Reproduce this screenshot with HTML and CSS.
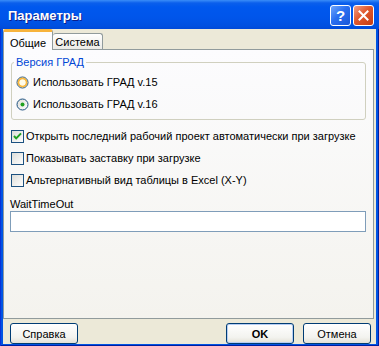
FILE: index.html
```html
<!DOCTYPE html>
<html lang="ru">
<head>
    <meta charset="UTF-8">
    <title>Параметры</title>
    <link rel="stylesheet" href="styles.css">
</head>
<body>
    <div class="window">
        <div class="titlebar">
            <span class="title">Параметры</span>
            <div class="caption-buttons">
                <span class="cap-btn help">?</span>
                <span class="cap-btn close">
                    <svg width="11" height="11" viewBox="0 0 11 11">
                        <path d="M1.5 1.5 L9.5 9.5 M9.5 1.5 L1.5 9.5" stroke="#fff" stroke-width="2" stroke-linecap="square"/>
                    </svg>
                </span>
            </div>
        </div>

        <div class="client">
            <div class="tabs">
                <span class="tab active">Общие</span>
                <span class="tab">Система</span>
            </div>

            <div class="tab-page">
                <fieldset class="group">
                    <legend>Версия ГРАД</legend>
                    <label class="option radio">
                        <svg width="13" height="13" viewBox="0 0 13 13">
                            <defs>
                                <linearGradient id="rfill" x1="0" y1="0" x2="1" y2="1">
                                    <stop offset="0" stop-color="#dcdcd7"/>
                                    <stop offset="1" stop-color="#ffffff"/>
                                </linearGradient>
                            </defs>
                            <circle cx="6.5" cy="6.5" r="5.5" fill="url(#rfill)" stroke="#1c5180"/>
                            <circle cx="6.5" cy="6.5" r="4" fill="none" stroke="#f9b83f" stroke-width="2"/>
                            <circle cx="6.5" cy="6.5" r="3" fill="#fffbe8"/>
                        </svg>
                        Использовать ГРАД v.15
                    </label>
                    <label class="option radio">
                        <svg width="13" height="13" viewBox="0 0 13 13">
                            <circle cx="6.5" cy="6.5" r="5.5" fill="url(#rfill)" stroke="#1c5180"/>
                            <circle cx="6.5" cy="6.5" r="2" fill="#21a121"/>
                        </svg>
                        Использовать ГРАД v.16
                    </label>
                </fieldset>

                <label class="option check">
                    <svg width="13" height="13" viewBox="0 0 13 13">
                        <defs>
                            <linearGradient id="cfill" x1="0" y1="0" x2="1" y2="1">
                                <stop offset="0" stop-color="#dcdcd7"/>
                                <stop offset="1" stop-color="#ffffff"/>
                            </linearGradient>
                        </defs>
                        <rect x="0.5" y="0.5" width="12" height="12" fill="url(#cfill)" stroke="#1c5180"/>
                        <path d="M3 6 L5.2 8.4 L10 3.4" fill="none" stroke="#21a121" stroke-width="2"/>
                    </svg>
                    Открыть последний рабочий проект автоматически при загрузке
                </label>
                <label class="option check">
                    <svg width="13" height="13" viewBox="0 0 13 13">
                        <rect x="0.5" y="0.5" width="12" height="12" fill="url(#cfill)" stroke="#1c5180"/>
                    </svg>
                    Показывать заставку при загрузке
                </label>
                <label class="option check">
                    <svg width="13" height="13" viewBox="0 0 13 13">
                        <rect x="0.5" y="0.5" width="12" height="12" fill="url(#cfill)" stroke="#1c5180"/>
                    </svg>
                    Альтернативный вид таблицы в Excel (X-Y)
                </label>

                <div class="field-label">WaitTimeOut</div>
                <div class="textbox"></div>
            </div>

            <div class="buttons">
                <span class="btn">Справка</span>
                <span class="spacer"></span>
                <span class="btn default">OK</span>
                <span class="btn">Отмена</span>
            </div>
        </div>
    </div>
</body>
</html>
```

FILE: styles.css
```css
body {
    margin: 0;
    font-family: "Liberation Sans", Arial, sans-serif;
    font-size: 11px;
    color: #000;
    overflow: hidden;
}
.window {
    width: 379px;
    height: 346px;
    display: flex;
    flex-direction: column;
    background: #0054e3;
    box-shadow: inset 1px 0 #0831d9, inset -1px 0 #001ea0, inset 0 -1px #001ea0;
}
.titlebar {
    height: 29px;
    display: flex;
    align-items: center;
    padding-left: 8px;
    background: linear-gradient(#3a8df8 0, #0b5fec 3px, #0058ee 7px, #0055ea 18px, #0050e0 26px, #0049d8 29px);
}
.title {
    flex: 1;
    font-weight: bold;
    font-size: 13px;
    color: #fff;
    text-shadow: 1px 1px #0a1e8c;
    margin-top: 1px;
}
.caption-buttons {
    display: flex;
    gap: 2px;
    margin-right: 5px;
    margin-top: 1px;
}
.cap-btn {
    width: 19px;
    height: 19px;
    border: 1px solid #fff;
    border-radius: 3px;
    display: flex;
    align-items: center;
    justify-content: center;
    color: #fff;
}
.help {
    background: linear-gradient(135deg, #6fa6fb, #2a6ff0 45%, #1a56d8);
    font-weight: bold;
    font-size: 15px;
}
.close {
    background: linear-gradient(135deg, #f0a088, #e0582d 45%, #c63d12);
}
.client {
    flex: 1;
    margin: 0 3px 2px 3px;
    background: #ece9d8;
    display: flex;
    flex-direction: column;
}
.tabs {
    height: 20px;
    display: flex;
    align-items: flex-end;
}
.tab {
    height: 16px;
    width: 49px;
    box-sizing: border-box;
    padding-top: 2px;
    text-align: center;
    border: 1px solid #919b9c;
    border-bottom: none;
    border-radius: 3px 3px 0 0;
    background: linear-gradient(#ffffff, #ecebe6);
}
.tab.active {
    height: 21px;
    width: 50px;
    margin-bottom: -1px;
    padding-top: 5px;
    position: relative;
    z-index: 1;
    border-top: 3px solid #f7b33c;
    background: #fcfcfe;
}
.tab.active + .tab {
    border-left: none;
    width: 50px;
}
.tab-page {
    height: 270px;
    box-sizing: border-box;
    margin-right: 2px;
    border: 1px solid #919b9c;
    background: linear-gradient(#fcfcfe, #f4f3ee);
    padding: 6px 7px 0 7px;
    display: flex;
    flex-direction: column;
}
.group {
    margin: 0;
    padding: 2px 4px 4px 4px;
    border: 1px solid #d0d0bf;
    border-radius: 3px;
}
.group legend {
    color: #0046d5;
    padding: 0 2px;
    margin-left: -2px;
    line-height: 13px;
}
.option {
    height: 22px;
    display: flex;
    align-items: center;
}
.option svg {
    flex: none;
}
.radio svg {
    margin-right: 4px;
}
.check svg {
    margin-right: 2px;
}
.group + .check {
    margin-top: 5px;
}
.field-label {
    margin-top: 6px;
    line-height: 14px;
    margin-left: -1px;
}
.textbox {
    height: 21px;
    box-sizing: border-box;
    border: 1px solid #7f9db9;
    background: #fff;
    margin-left: -1px;
}
.buttons {
    height: 25px;
    box-sizing: border-box;
    padding: 4px 5px 0 7px;
    display: flex;
    gap: 9px;
}
.spacer {
    flex: 1;
}
.btn {
    width: 68px;
    height: 21px;
    box-sizing: border-box;
    border: 1px solid #003c74;
    border-radius: 3px;
    background: linear-gradient(#ffffff, #f3f3ef 70%, #e3e0d6);
    display: flex;
    align-items: center;
    justify-content: center;
}
.btn.default {
    font-weight: bold;
    box-shadow: inset 0 0 0 1px #b6cdf3;
}
```
